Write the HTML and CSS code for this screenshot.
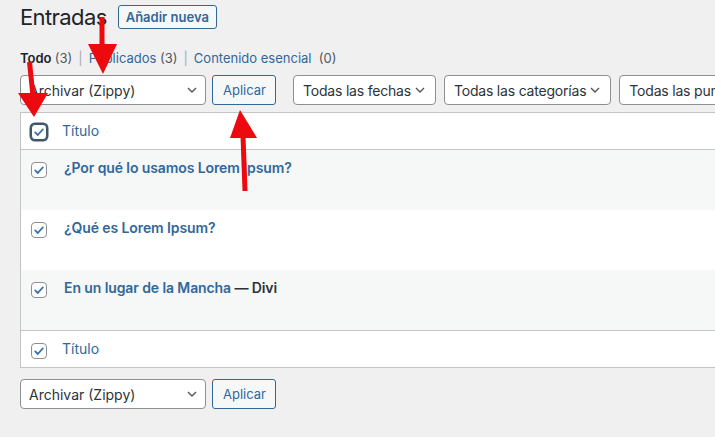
FILE: index.html
```html
<!DOCTYPE html>
<html>
<head>
	<meta charset="utf-8">
	<meta name="viewport" content="width=device-width, initial-scale=1">
	<title>Entradas</title>
	<link rel="stylesheet" href="styles.css">
</head>
<body>

<div class="wrap">
	<div class="head">
		<h1>Entradas</h1>
		<a class="add" href="#">Añadir nueva</a>
	</div>

	<ul class="views">
		<li class="current">Todo <span class="count">(3)</span></li>
		<li class="sep">|</li>
		<li><a href="#">Publicados</a> <span class="count">(3)</span></li>
		<li class="sep">|</li>
		<li><a href="#">Contenido esencial</a> <span class="count">&nbsp;(0)</span></li>
	</ul>

	<div class="nav">
		<div class="select bulk"><span>Archivar (Zippy)</span><svg class="chev" width="10" height="6" viewBox="0 0 10 6"><path d="M1 1l4 4 4-4"/></svg></div>
		<button class="button">Aplicar</button>
		<div class="filters">
			<div class="select"><span>Todas las fechas</span><svg class="chev" width="10" height="6" viewBox="0 0 10 6"><path d="M1 1l4 4 4-4"/></svg></div>
			<div class="select"><span>Todas las categorías</span><svg class="chev" width="10" height="6" viewBox="0 0 10 6"><path d="M1 1l4 4 4-4"/></svg></div>
			<div class="select"><span>Todas las puntuaciones</span><svg class="chev" width="10" height="6" viewBox="0 0 10 6"><path d="M1 1l4 4 4-4"/></svg></div>
		</div>
	</div>

	<table class="posts">
		<thead>
			<tr>
				<th class="check head-check"><span class="cb focus"><svg width="14" height="14" viewBox="0 0 14 14"><path d="M3.2 7.4l2.6 2.6 5-5.6"/></svg></span></th>
				<th class="title"><a href="#">Título</a></th>
			</tr>
		</thead>
		<tbody>
			<tr>
				<td class="check"><span class="cb"><svg width="14" height="14" viewBox="0 0 14 14"><path d="M3.2 7.4l2.6 2.6 5-5.6"/></svg></span></td>
				<td class="title"><a href="#">¿Por qué lo usamos Lorem Ipsum?</a></td>
			</tr>
			<tr>
				<td class="check"><span class="cb"><svg width="14" height="14" viewBox="0 0 14 14"><path d="M3.2 7.4l2.6 2.6 5-5.6"/></svg></span></td>
				<td class="title"><a href="#">¿Qué es Lorem Ipsum?</a></td>
			</tr>
			<tr>
				<td class="check"><span class="cb"><svg width="14" height="14" viewBox="0 0 14 14"><path d="M3.2 7.4l2.6 2.6 5-5.6"/></svg></span></td>
				<td class="title"><a href="#">En un lugar de la Mancha</a> <span class="state">— Divi</span></td>
			</tr>
		</tbody>
		<tfoot>
			<tr>
				<th class="check"><span class="cb"><svg width="14" height="14" viewBox="0 0 14 14"><path d="M3.2 7.4l2.6 2.6 5-5.6"/></svg></span></th>
				<th class="title"><a href="#">Título</a></th>
			</tr>
		</tfoot>
	</table>

	<div class="nav bottom">
		<div class="select bulk"><span>Archivar (Zippy)</span><svg class="chev" width="10" height="6" viewBox="0 0 10 6"><path d="M1 1l4 4 4-4"/></svg></div>
		<button class="button">Aplicar</button>
	</div>
</div>

<!-- annotation arrows drawn over the screenshot -->
<svg class="marks" width="715" height="437" viewBox="0 0 715 437">
	<line x1="102" y1="17" x2="102" y2="48"/>
	<polygon points="88,44 117,44 103,74"/>
	<line x1="29.5" y1="62" x2="33" y2="96"/>
	<polygon points="18,93 48,93 34,117"/>
	<line x1="243" y1="136" x2="245" y2="191"/>
	<polygon points="240,110 230,138 257,138"/>
</svg>

</body>
</html>
```

FILE: styles.css
```css
html {
	font-family: Inter, "Noto Sans", sans-serif;
}

body {
	margin: 0;
	background: #f0f0f1;
	color: #2c3338;
	font-size: 13px;
	overflow: hidden;
	height: 437px;
	position: relative;
}

a {
	color: #30689b;
	text-decoration: none;
}

.wrap {
	padding: 2px 0 0 20px;
}

.head {
	display: flex;
	align-items: center;
	gap: 11px;
	height: 30px;
}

h1 {
	margin: 0;
	font-size: 22px;
	font-weight: 400;
	letter-spacing: -0.6px;
	color: #1d2327;
	line-height: 30px;
}

.add {
	display: inline-block;
	padding: 0 7px;
	height: 24px;
	line-height: 22px;
	box-sizing: border-box;
	border: 1px solid #30689b;
	border-radius: 3px;
	background: #f6f7f7;
	font-size: 13px;
	font-weight: 600;
}

.views {
	list-style: none;
	margin: 18px 0 0;
	padding: 0;
	display: flex;
	gap: 6px;
	line-height: 16px;
	color: #50575e;
}

.views .current {
	color: #1d2327;
	font-weight: 600;
}

.views .count {
	font-weight: 400;
	color: #50575e;
}

.views .sep {
	color: #a7aaad;
}

.nav {
	margin-top: 9px;
	display: flex;
	gap: 6px;
	white-space: nowrap;
}

.nav > *,
.filters > * {
	flex-shrink: 0;
}

.nav.bottom {
	margin-top: 11px;
}

.filters {
	display: flex;
	gap: 8px;
	margin-left: 11px;
}

.select {
	display: flex;
	align-items: center;
	justify-content: space-between;
	gap: 4px;
	height: 30px;
	box-sizing: border-box;
	padding: 0 10px 0 9px;
	border: 1px solid #8c8f94;
	border-radius: 4px;
	background: #fff;
	font-size: 14px;
	letter-spacing: -0.2px;
	color: #2c3338;
}

.select.bulk {
	width: 186px;
	padding: 0 8px 0 8px;
	letter-spacing: 0;
}

.chev path {
	fill: none;
	stroke: #50575e;
	stroke-width: 1.4;
}

.button {
	height: 30px;
	padding: 0 10px;
	border: 1px solid #30689b;
	border-radius: 3px;
	background: #f6f7f7;
	color: #30689b;
	font-family: inherit;
	font-size: 13px;
	width: 64px;
}

.posts {
	margin-top: 7px;
	width: 980px;
	border: 1px solid #c3c4c7;
	border-spacing: 0;
	background: #fff;
	font-size: 14px;
}

.posts th,
.posts td {
	padding: 8px 10px;
	text-align: left;
	vertical-align: top;
	line-height: 20px;
	font-weight: 400;
}

.posts thead th {
	border-bottom: 1px solid #c3c4c7;
}

.posts tfoot th {
	border-top: 1px solid #c3c4c7;
}

.posts tbody td {
	height: 44px;
}

.posts tbody tr:nth-child(odd) {
	background: #f6f7f7;
}

.posts .check {
	width: 16px;
	padding: 12px 7px 0 10px;
}

.posts .head-check {
	padding-top: 11px;
}

.posts th.title {
	padding-left: 8px;
}

.posts td.title {
	font-weight: 600;
	letter-spacing: -0.1px;
}

.posts .state {
	color: #2c3338;
}

.cb {
	display: block;
	width: 16px;
	height: 16px;
	box-sizing: border-box;
	border: 1px solid #8c8f94;
	border-radius: 4px;
	background: #fff;
	position: relative;
}

.cb svg {
	position: absolute;
	left: 0;
	top: 0;
}

.cb path {
	fill: none;
	stroke: #3a73a8;
	stroke-width: 1.8;
	stroke-linecap: round;
	stroke-linejoin: round;
}

.cb.focus {
	border: 1px solid #3b5668;
	box-shadow: 0 0 0 1.5px #3b5668;
}

.marks {
	position: absolute;
	left: 0;
	top: 0;
	pointer-events: none;
}

.marks line {
	stroke: #ec0a0f;
	stroke-width: 5;
}

.marks polygon {
	fill: #ec0a0f;
}
```
